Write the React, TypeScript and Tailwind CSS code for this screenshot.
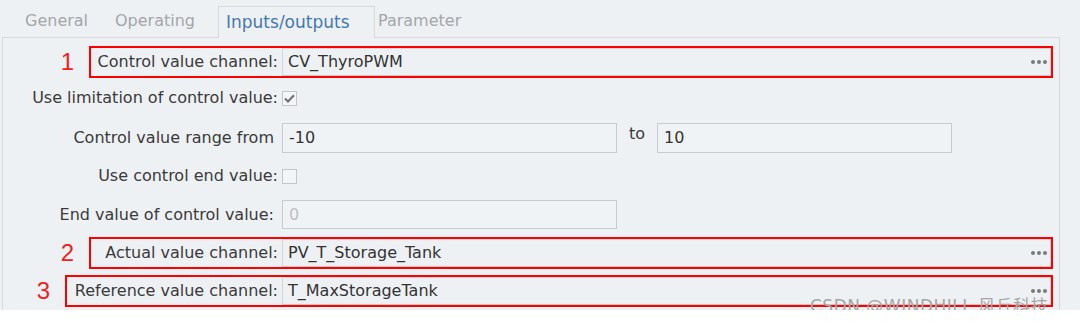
import React from 'react';

const font = { fontFamily: '"DejaVu Sans", "Noto Sans CJK SC", sans-serif' };

const Dots = () => (
  <div className="flex items-center gap-[2px] mr-[3px]">
    <div className="w-[4px] h-[4px] rounded-full bg-[#7a7a7a]"></div>
    <div className="w-[4px] h-[4px] rounded-full bg-[#7a7a7a]"></div>
    <div className="w-[4px] h-[4px] rounded-full bg-[#7a7a7a]"></div>
  </div>
);

const Checkbox = ({ checked }: { checked?: boolean }) => (
  <div className="w-[15px] h-[15px] border border-[#c4c7ca] bg-[#f3f5f7] flex items-center justify-center">
    {checked && (
      <svg width="11" height="9" viewBox="0 0 11 9">
        <path d="M1 4.5 L4 7.5 L10 1.2" fill="none" stroke="#6d6f72" strokeWidth="2" />
      </svg>
    )}
  </div>
);

// channel row wrapped in the red annotation box
const ChannelRow = ({ num, label, value, left }: { num: string; label: string; value: string; left: number }) => (
  <div className="flex items-center h-[32px]">
    <div
      className="text-[24px] leading-none text-[#f02020] text-right pr-[15px]"
      style={{ width: left, fontFamily: '"Liberation Sans", sans-serif' }}
    >
      {num}
    </div>
    <div className="flex items-center h-[32px] border-2 border-[#ff0000]" style={{ width: 1053 - 4 - left }}>
      <div className="flex-1 text-right pr-[4px] text-[#3a3a3a] whitespace-nowrap">{label}</div>
      <div className="w-[769px] h-[28px] border border-[#d3d6d9] border-b-[#c7cacd] bg-[#eef1f4] flex items-center justify-between pl-[5px]">
        <span className="text-[#333]">{value}</span>
        <Dots />
      </div>
    </div>
  </div>
);

const App: React.FC = () => {
  return (
    <div className="w-[1080px] h-[327px] bg-white overflow-hidden text-[16px]" style={font}>
      <div className="relative h-[310px] bg-[#eef1f4] overflow-hidden">
        {/* tabs */}
        <div className="flex items-end h-[37px] pl-[17px] text-[16px]">
          <div className="w-[90px] h-[32px] flex items-center pl-[8px] text-[#a3a6a9]">General</div>
          <div className="w-[111px] h-[32px] flex items-center pl-[8px] text-[#a3a6a9]">Operating</div>
          <div className="w-[157px] h-[32px] flex items-center pl-[7px] text-[#4678b0] text-[17px] border border-b-0 border-[#d6d9dc] bg-[#eef1f4] relative top-[1px]">
            Inputs/outputs
          </div>
          <div className="h-[32px] flex items-center pl-[3px] text-[#a3a6a9]">Parameter</div>
        </div>

        {/* panel */}
        <div className="ml-[2px] w-[1058px] h-[300px] border border-[#d6d9dc] pl-[1px] pt-[8px]">
          <ChannelRow num="1" label="Control value channel:" value="CV_ThyroPWM" left={85} />

          <div className="flex items-center h-[28px] mt-[6px]">
            <div className="w-[278px] text-right pr-[4px] text-[#3a3a3a] whitespace-nowrap">Use limitation of control value:</div>
            <Checkbox checked />
          </div>

          <div className="flex items-start h-[30px] mt-[11px]">
            <div className="w-[278px] h-[30px] flex items-center justify-end pr-[8px] text-[#3a3a3a] whitespace-nowrap">Control value range from</div>
            <div className="w-[335px] h-[30px] border border-[#c9ccce] bg-[#f0f3f6] flex items-center pl-[6px] text-[#333]">-10</div>
            <div className="ml-[12px] mr-[12px] text-[#3a3a3a] leading-none mt-[3px]">to</div>
            <div className="w-[295px] h-[30px] border border-[#c9ccce] bg-[#f0f3f6] flex items-center pl-[6px] text-[#333]">10</div>
          </div>

          <div className="flex items-center h-[28px] mt-[9px]">
            <div className="w-[278px] text-right pr-[4px] text-[#3a3a3a] whitespace-nowrap">Use control end value:</div>
            <Checkbox />
          </div>

          <div className="flex items-center h-[29px] mt-[10px]">
            <div className="w-[278px] text-right pr-[8px] text-[#3a3a3a] whitespace-nowrap">End value of control value:</div>
            <div className="w-[335px] h-[29px] border border-[#c9ccce] bg-[#f0f3f6] flex items-center pl-[6px] text-[#bdbfc1]">0</div>
          </div>

          <div className="mt-[8px]">
            <ChannelRow num="2" label="Actual value channel:" value="PV_T_Storage_Tank" left={85} />
          </div>
          <div className="mt-[6px]">
            <ChannelRow num="3" label="Reference value channel:" value="T_MaxStorageTank" left={61} />
          </div>
        </div>

        {/* watermark */}
        <div className="absolute left-[810px] top-[294px] text-[17px] text-[#a5a5a5] whitespace-nowrap tracking-[0.5px]">
          CSDN @WINDHILL 风丘科技
        </div>
      </div>
    </div>
  );
};

export default App;
